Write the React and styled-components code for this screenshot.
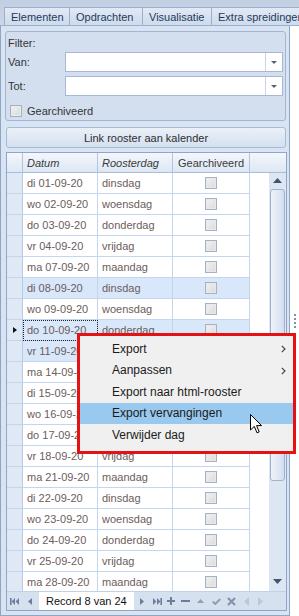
import styled, { createGlobalStyle } from "styled-components";

const GlobalStyle = createGlobalStyle`
  html, body { margin: 0; padding: 0; background: #fff; }
  body { font-family: "Liberation Sans", Arial, sans-serif; font-size: 11px; color: #333; }
`;

const tabs = [
  { label: "Elementen", w: 66 },
  { label: "Opdrachten", w: 74 },
  { label: "Visualisatie", w: 70 },
  { label: "Extra spreidingen", w: 100 },
];

const days = ["di", "wo", "do", "vr", "ma"];
const dayNames = { di: "dinsdag", wo: "woensdag", do: "donderdag", vr: "vrijdag", ma: "maandag" };
const dates = ["01", "02", "03", "04", "07", "08", "09", "10", "11", "14", "15", "16", "17", "18", "21", "22", "23", "24", "25", "28"];
const rows = dates.map((d, i) => {
  const day = days[i % 5];
  return { date: `${day} ${d}-09-20`, name: dayNames[day] };
});
const selectedRows = [5, 7, 8];
const focusRow = 7;

const menuItems = [
  { label: "Export", sub: true },
  { label: "Aanpassen", sub: true },
  { label: "Export naar html-rooster" },
  { label: "Export vervangingen", active: true },
  { label: "Verwijder dag" },
];

function App() {
  return (
    <Screen>
      <GlobalStyle />
      <TabStrip>
        {tabs.map((t) => (
          <Tab key={t.label} $w={t.w}>{t.label}</Tab>
        ))}
      </TabStrip>
      <Body>
        <Panel>
          <Group>
            <FilterTitle>Filter:</FilterTitle>
            <FieldRow>
              <FieldLabel>Van:</FieldLabel>
              <Combo>
                <ComboText />
                <ComboButton><DownArrow /></ComboButton>
              </Combo>
            </FieldRow>
            <FieldRow>
              <FieldLabel>Tot:</FieldLabel>
              <Combo>
                <ComboText />
                <ComboButton><DownArrow /></ComboButton>
              </Combo>
            </FieldRow>
            <CheckRow>
              <CheckBox />
              <span>Gearchiveerd</span>
            </CheckRow>
          </Group>
          <LinkButton>Link rooster aan kalender</LinkButton>
          <Grid>
            <HeaderRow>
              <HeadCell $w={16} />
              <HeadCell $w={75} $italic>Datum</HeadCell>
              <HeadCell $w={75} $italic>Roosterdag</HeadCell>
              <HeadCell $w={77} $center>Gearchiveerd</HeadCell>
              <HeadFill />
            </HeaderRow>
            <GridBody>
              <Rows>
                {rows.map((r, i) => {
                  const sel = selectedRows.includes(i);
                  return (
                    <Row key={r.date}>
                      <Indicator>{i === focusRow && <RowArrow />}</Indicator>
                      <Cell $w={75} $sel={sel} $focus={i === focusRow}>{r.date}</Cell>
                      <Cell $w={75} $sel={sel}>{r.name}</Cell>
                      <Cell $w={77} $sel={sel} $center><CheckBox /></Cell>
                    </Row>
                  );
                })}
              </Rows>
              <ScrollBar>
                <ScrollArrow viewBox="0 0 9 5" width="9" height="5"><polygon points="0,5 9,5 4.5,0" /></ScrollArrow>
                <Thumb />
                <ScrollSpacer />
                <ScrollArrow viewBox="0 0 9 5" width="9" height="5"><polygon points="0,0 9,0 4.5,5" /></ScrollArrow>
              </ScrollBar>
            </GridBody>
            <Navigator>
              <NavButton $w={15}>
                <svg width="9" height="7" viewBox="0 0 9 7"><rect x="0" y="0" width="1.6" height="7" /><polygon points="5,0 5,7 1.6,3.5" /><polygon points="9,0 9,7 5.6,3.5" /></svg>
              </NavButton>
              <NavButton $w={16}>
                <svg width="4" height="7" viewBox="0 0 4 7"><polygon points="4,0 4,7 0,3.5" /></svg>
              </NavButton>
              <RecordBox>Record 8 van 24</RecordBox>
              <NavButton $w={16}>
                <svg width="4" height="7" viewBox="0 0 4 7"><polygon points="0,0 0,7 4,3.5" /></svg>
              </NavButton>
              <NavButton $w={14}>
                <svg width="9" height="7" viewBox="0 0 9 7"><polygon points="0,0 0,7 3.4,3.5" /><polygon points="4,0 4,7 7.4,3.5" /><rect x="7.4" y="0" width="1.6" height="7" /></svg>
              </NavButton>
              <NavButton $w={14}>
                <svg width="8" height="8" viewBox="0 0 8 8"><rect x="3" y="0" width="2" height="8" /><rect x="0" y="3" width="8" height="2" /></svg>
              </NavButton>
              <NavButton $w={15}>
                <svg width="9" height="2" viewBox="0 0 9 2"><rect x="0" y="0" width="9" height="2" /></svg>
              </NavButton>
              <NavButton $w={15} $tone="#929fb3">
                <svg width="7" height="4" viewBox="0 0 7 4"><polygon points="0,4 7,4 3.5,0" /></svg>
              </NavButton>
              <NavButton $w={16} $tone="#929fb3">
                <svg width="9" height="7" viewBox="0 0 9 7"><polyline points="0.8,3.5 3.3,6 8.3,1" fill="none" stroke="currentColor" strokeWidth="2" /></svg>
              </NavButton>
              <NavButton $w={15} $tone="#8494ad">
                <svg width="9" height="9" viewBox="0 0 9 9"><path d="M1 1 L8 8 M8 1 L1 8" stroke="currentColor" strokeWidth="2.2" /></svg>
              </NavButton>
              <NavButton $w={14} $tone="#bcc8da">
                <svg width="5" height="9" viewBox="0 0 5 9"><polygon points="5,0 5,9 0,4.5" /></svg>
              </NavButton>
              <NavButton $w={14} $tone="#bcc8da">
                <svg width="5" height="9" viewBox="0 0 5 9"><polygon points="0,0 0,9 5,4.5" /></svg>
              </NavButton>
            </Navigator>
          </Grid>
        </Panel>
        <Splitter>
          <Dot /><Dot /><Dot /><Dot />
        </Splitter>
      </Body>

      <Menu>
        {menuItems.map((m) => (
          <MenuItem key={m.label} $active={m.active}>
            {m.label}
            {m.sub && (
              <SubArrow width="5" height="8" viewBox="0 0 5 8">
                <polyline points="0.8,0.8 4,4 0.8,7.2" fill="none" stroke="#444" strokeWidth="1.2" />
              </SubArrow>
            )}
          </MenuItem>
        ))}
      </Menu>
      <Cursor width="13" height="20" viewBox="0 0 13 20">
        <path d="M0.5 0.5 L0.5 16 L4.3 12.4 L7 18.8 L9.2 17.9 L6.6 11.6 L11.6 11.6 Z" fill="#fff" stroke="#000" strokeWidth="1" strokeLinejoin="miter" />
      </Cursor>
    </Screen>
  );
}

const Screen = styled.div`
  position: relative;
  width: 299px;
  height: 616px;
  overflow: hidden;
  background: #fff;
  display: flex;
  flex-direction: column;
`;

const TabStrip = styled.div`
  height: 26px;
  box-sizing: border-box;
  padding: 7px 0 0 4px;
  display: flex;
  align-items: flex-end;
  background: linear-gradient(#c2cfe2, #cbd6e6);
  border-bottom: 1px solid #9bb0cf;
  flex-shrink: 0;
`;

const Tab = styled.div`
  width: ${(p) => p.$w}px;
  flex-shrink: 0;
  height: 18px;
  box-sizing: border-box;
  border: 1px solid #9cb0ce;
  border-bottom: none;
  margin-right: -1px;
  background: linear-gradient(#e1e9f4, #cfdbeb);
  color: #1e3a60;
  font-size: 11px;
  padding-left: 6px;
  display: flex;
  align-items: center;
  white-space: nowrap;
  overflow: hidden;
`;

const Body = styled.div`
  flex: 1;
  display: flex;
`;

const Panel = styled.div`
  width: 290px;
  box-sizing: border-box;
  border: 1px solid #8fa5c6;
  border-top: none;
  background: #d9e4f2;
  padding: 5px 2px 0 4px;
  display: flex;
  flex-direction: column;
`;

const Group = styled.div`
  width: 281px;
  height: 90px;
  box-sizing: border-box;
  border: 1px solid #a2b5d2;
  border-radius: 3px;
  background: #d3dfef;
  padding: 2px 2px 0 2px;
  display: flex;
  flex-direction: column;
`;

const FilterTitle = styled.div`
  height: 18px;
  display: flex;
  align-items: center;
  color: #333;
`;

const FieldRow = styled.div`
  display: grid;
  grid-template-columns: 57px 218px;
  align-items: center;
  height: 20px;
  margin-bottom: 4px;
`;

const FieldLabel = styled.div`
  color: #333;
`;

const Combo = styled.div`
  height: 20px;
  box-sizing: border-box;
  border: 1px solid #a6b8d3;
  background: #fff;
  display: flex;
`;

const ComboText = styled.div`
  flex: 1;
`;

const ComboButton = styled.div`
  width: 16px;
  border-left: 1px solid #c9d5e6;
  display: flex;
  align-items: center;
  justify-content: center;
`;

const DownArrow = styled.span`
  width: 0;
  height: 0;
  border-left: 3.5px solid transparent;
  border-right: 3.5px solid transparent;
  border-top: 3.5px solid #5a6270;
`;

const CheckRow = styled.div`
  display: flex;
  align-items: center;
  gap: 5px;
  height: 16px;
  margin-top: 3px;
  padding-left: 2px;
  color: #333;
`;

const CheckBox = styled.span`
  display: inline-block;
  width: 12px;
  height: 12px;
  box-sizing: border-box;
  border: 1px solid #a3b2c6;
  background: linear-gradient(135deg, #f2f2f2, #dadada);
  box-shadow: inset 0 0 0 1px #e9e9e9;
`;

const LinkButton = styled.div`
  margin: 6px 0 0 1px;
  width: 280px;
  height: 21px;
  box-sizing: border-box;
  border: 1px solid #a7bbd7;
  border-radius: 3px;
  background: linear-gradient(#eaf0f8, #d5e0ef);
  display: flex;
  align-items: center;
  justify-content: center;
  color: #2e2e2e;
`;

const Grid = styled.div`
  margin: 4px 0 0 1px;
  width: 281px;
  height: 459px;
  box-sizing: border-box;
  border: 1px solid #8fa6c8;
  background: #fff;
  display: flex;
  flex-direction: column;
  overflow: hidden;
`;

const HeaderRow = styled.div`
  height: 20px;
  box-sizing: border-box;
  display: flex;
  border-bottom: 1px solid #a9bcd8;
  background: linear-gradient(#f4f7fc, #dde7f4);
  flex-shrink: 0;
`;

const HeadCell = styled.div`
  width: ${(p) => p.$w}px;
  box-sizing: border-box;
  border-right: 1px solid #b3c5de;
  display: flex;
  align-items: center;
  justify-content: ${(p) => (p.$center ? "center" : "flex-start")};
  padding-left: ${(p) => (p.$center ? 0 : 4)}px;
  font-style: ${(p) => (p.$italic ? "italic" : "normal")};
  color: #3a3a3a;
`;

const HeadFill = styled.div`
  flex: 1;
`;

const GridBody = styled.div`
  flex: 1;
  display: flex;
  min-height: 0;
`;

const Rows = styled.div`
  width: 261px;
  overflow: hidden;
`;

const Row = styled.div`
  height: 21px;
  display: flex;
`;

const Indicator = styled.div`
  width: 16px;
  box-sizing: border-box;
  border-right: 1px solid #b9cbe4;
  border-bottom: 1px solid #c6d5ea;
  background: #dfe8f5;
  display: flex;
  align-items: center;
  justify-content: center;
`;

const RowArrow = styled.span`
  width: 0;
  height: 0;
  border-top: 3.5px solid transparent;
  border-bottom: 3.5px solid transparent;
  border-left: 4px solid #111;
`;

const Cell = styled.div`
  width: ${(p) => p.$w}px;
  box-sizing: border-box;
  border-right: 1px solid #c4d6ef;
  border-bottom: 1px solid #c4d6ef;
  background: ${(p) => (p.$sel ? "#d8e7fa" : "#fff")};
  display: flex;
  align-items: center;
  justify-content: ${(p) => (p.$center ? "center" : "flex-start")};
  padding-left: ${(p) => (p.$center ? 0 : 4)}px;
  color: #6b5d5d;
  white-space: nowrap;
  outline: ${(p) => (p.$focus ? "1px dotted #222" : "none")};
  outline-offset: -1px;
`;

const ScrollBar = styled.div`
  width: 17px;
  margin-left: 1px;
  background: #dde6f3;
  display: flex;
  flex-direction: column;
  align-items: center;
  padding: 5px 0 7px;
  box-sizing: border-box;
`;

const ScrollArrow = styled.svg`
  fill: #44546f;
  flex-shrink: 0;
`;

const Thumb = styled.div`
  margin-top: 6px;
  width: 15px;
  height: 292px;
  box-sizing: border-box;
  border: 1px solid #9fb2ce;
  border-radius: 3px;
  background: linear-gradient(90deg, #eef3fa, #d3dfef);
`;

const ScrollSpacer = styled.div`
  flex: 1;
`;

const Navigator = styled.div`
  height: 18px;
  flex-shrink: 0;
  display: flex;
  align-items: stretch;
  background: #d6e1f0;
  border-top: 1px solid #c2d1e6;
`;

const NavButton = styled.div`
  width: ${(p) => p.$w}px;
  display: flex;
  align-items: center;
  justify-content: center;
  color: ${(p) => p.$tone || "#6c7e9b"};
  fill: currentColor;
  svg { fill: currentColor; }
`;

const RecordBox = styled.div`
  width: 95px;
  margin-left: 1px;
  background: #fff;
  display: flex;
  align-items: center;
  padding-left: 7px;
  box-sizing: border-box;
  color: #111;
`;

const Splitter = styled.div`
  flex: 1;
  display: flex;
  flex-direction: column;
  align-items: center;
  justify-content: center;
  gap: 2px;
  padding-left: 1px;
`;

const Dot = styled.span`
  width: 2px;
  height: 2px;
  background: #7d91b2;
`;

const Menu = styled.div`
  position: absolute;
  left: 77px;
  top: 333px;
  width: 219px;
  height: 121px;
  box-sizing: border-box;
  border: 3px solid #e41212;
  background: #f0f0f0;
  padding-top: 2px;
`;

const MenuItem = styled.div`
  position: relative;
  height: 21.5px;
  display: flex;
  align-items: center;
  padding-left: 32px;
  font-size: 12px;
  color: #1b1b1b;
  background: ${(p) => (p.$active ? "#99c9ef" : "transparent")};
`;

const SubArrow = styled.svg`
  position: absolute;
  right: 7px;
  top: 7px;
`;

const Cursor = styled.svg`
  position: absolute;
  left: 250px;
  top: 414px;
`;

export default App;
